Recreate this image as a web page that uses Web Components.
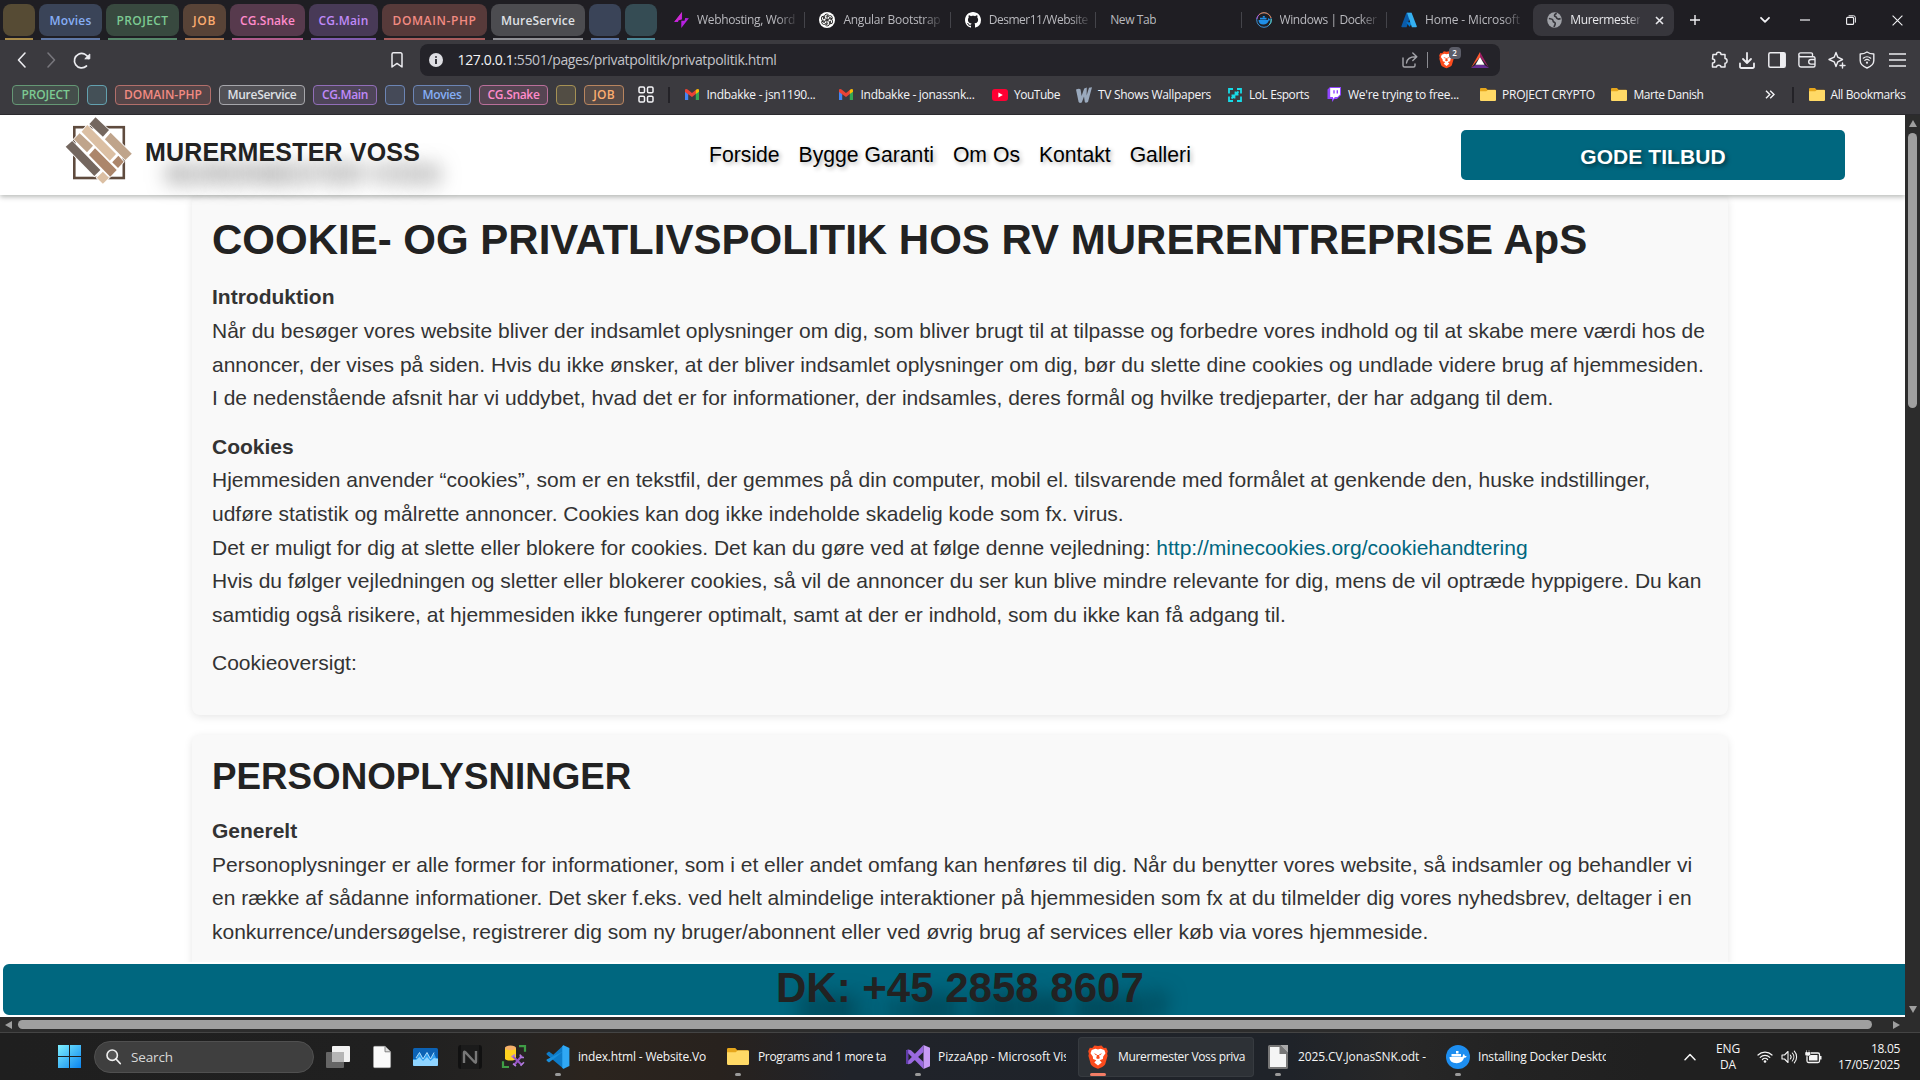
<!DOCTYPE html>
<html lang="da">
<head>
<meta charset="utf-8">
<title>Murermester Voss privatpolitik</title>
<style>
html,body{margin:0;height:100%;overflow:hidden;background:#fff}
body{font-family:"Liberation Sans",Arial,sans-serif}
desktop-screen{width:1920px;height:1080px}
</style>
</head>
<body>
<desktop-screen>
  <browser-tabs></browser-tabs>
  <browser-toolbar></browser-toolbar>
  <bookmark-bar></bookmark-bar>
  <page-view>
    <site-header></site-header>
    <policy-card>
      <h1 slot="title" style="font-size:42px;line-height:50.4px">COOKIE- OG PRIVATLIVSPOLITIK HOS RV MURERENTREPRISE ApS</h1>
      <p><b>Introduktion</b><br>Når du besøger vores website bliver der indsamlet oplysninger om dig, som bliver brugt til at tilpasse og forbedre vores indhold og til at skabe mere værdi hos de<br>annoncer, der vises på siden. Hvis du ikke ønsker, at der bliver indsamlet oplysninger om dig, bør du slette dine cookies og undlade videre brug af hjemmesiden.<br>I de nedenstående afsnit har vi uddybet, hvad det er for informationer, der indsamles, deres formål og hvilke tredjeparter, der har adgang til dem.</p>
      <p><b>Cookies</b><br>Hjemmesiden anvender “cookies”, som er en tekstfil, der gemmes på din computer, mobil el. tilsvarende med formålet at genkende den, huske indstillinger,<br>udføre statistik og målrette annoncer. Cookies kan dog ikke indeholde skadelig kode som fx. virus.<br>Det er muligt for dig at slette eller blokere for cookies. Det kan du gøre ved at følge denne vejledning: <a>http://minecookies.org/cookiehandtering</a><br>Hvis du følger vejledningen og sletter eller blokerer cookies, så vil de annoncer du ser kun blive mindre relevante for dig, mens de vil optræde hyppigere. Du kan<br>samtidig også risikere, at hjemmesiden ikke fungerer optimalt, samt at der er indhold, som du ikke kan få adgang til.</p>
      <p>Cookieoversigt:</p>
    </policy-card>
    <policy-card>
      <h2 slot="title" style="font-size:36.75px;line-height:44.1px">PERSONOPLYSNINGER</h2>
      <p><b>Generelt</b><br>Personoplysninger er alle former for informationer, som i et eller andet omfang kan henføres til dig. Når du benytter vores website, så indsamler og behandler vi<br>en række af sådanne informationer. Det sker f.eks. ved helt almindelige interaktioner på hjemmesiden som fx at du tilmelder dig vores nyhedsbrev, deltager i en<br>konkurrence/undersøgelse, registrerer dig som ny bruger/abonnent eller ved øvrig brug af services eller køb via vores hjemmeside.</p>
    </policy-card>
    <phone-bar slot="footer">DK: +45 2858 8607</phone-bar>
  </page-view>
  <task-bar></task-bar>
</desktop-screen>
<script>
const define=(name,html,init)=>customElements.define(name,class extends HTMLElement{
  connectedCallback(){
    if(this.shadowRoot)return;
    this.attachShadow({mode:'open'}).innerHTML=typeof html==='function'?html(this):html;
    if(init)init(this);
  }
});

/* Icon library: name -> [viewBox, markup] */
const S='fill="none" stroke="currentColor" stroke-linecap="round" stroke-linejoin="round"';
const I={
back:['0 0 9 16',`<path d="M8 1 1.5 8 8 15" ${S} stroke-width="1.6"/>`],
fwd:['0 0 9 16',`<path d="M1 1 7.500 8 1 15" ${S} stroke-width="1.6"/>`],
reload:['0 0 18 17',`<path d="M15.500 6.500A7.200 7.200 0 1 0 13.500 14" ${S} stroke-width="1.700"/><path d="M11.800 6.800h5V2z" fill="currentColor" stroke="currentColor" stroke-linejoin="round"/>`],
mark:['0 0 12 16',`<path d="M1 2.200A1.400 1.400 0 0 1 2.400.8h7.200A1.400 1.400 0 0 1 11 2.200V15l-5-3.600L1 15z" ${S} stroke-width="1.500"/>`],
info:['0 0 14 14','<circle cx="7" cy="7" r="7" fill="#dedee3"/><path d="M7 6v5M7 3.300v1.400" stroke="#242329" stroke-width="1.800"/>'],
share:['0 0 16 16',`<path d="M1 6v7.500a1.500 1.500 0 0 0 1.500 1.500h9a1.500 1.500 0 0 0 1.500-1.500V12M4.500 11C5 7 8 4.800 13.500 4.800M10.800 1l4 3.800-4 3.800" ${S} stroke-width="1.400"/>`],
lion:['0 0 20 24','<path d="M4.200 3 6.500.5 10 1l3.500-.5L15.800 3l2.400-.2 1.600 3.400-.7 2.500.5 2-2.400 8.600c-.5 1.500-5 4-7.200 4.500-2.200-.5-6.700-3-7.200-4.500L.4 10.700l.5-2L.2 6.200 1.800 2.800z" fill="#fb4b1d"/><path d="m10 4.500 2.500-.8 3.800 1.400 1.200 3.200-2.300 3.200-.3 2.500-3.200 1.200 2 2.300L10 20.500 6.300 17.500l2-2.300L5.100 14l-.3-2.500-2.300-3.200 1.200-3.200 3.800-1.400z" fill="#fff"/><path d="m5.800 8.300 3 1-.5 1.300zM14.200 8.300l-3 1 .5 1.300zM9 10l-.8 3.300 1.800.8 1.800-.8L11 10z" fill="#fb4b1d"/>'],
bat:['0 0 18 16','<path d="M9 0 0 16 9 5z" fill="#ff5a32"/><path d="M9 0v5l9 11z" fill="#9e1f63"/><path d="M0 16h18l-4.500-3h-9z" fill="#662d91"/><path d="M9 5 4.500 12.800h9z" fill="#fff"/>'],
puzzle:['0 0 18 18',`<path d="M3 3.500h3.500C6 .5 11 .2 11 3.500h4v4c3 0 2.500 5 0 4.800V16h-4c0-2.500-4.500-2.500-4.500 0H2.500v-4C5.500 12 5.500 8 2.500 8z" ${S} stroke-width="1.500"/>`],
download:['0 0 16 17',`<path d="M8 1v9M4 7l4 4 4-4M1 11.500v3A1.400 1.400 0 0 0 2.400 16h11.200a1.400 1.400 0 0 0 1.400-1.500v-3" ${S} stroke-width="1.800"/>`],
side:['0 0 18 16',`<rect x=".8" y=".8" width="16.400" height="14.400" rx="1.500" ${S} stroke-width="1.500"/><path d="M12 1h5v14h-5z" fill="currentColor"/>`],
wallet:['0 0 18 16',`<path d="M14.500 3.500V2.200A1.300 1.300 0 0 0 13.200.9H2.700a1.900 1.900 0 0 0 0 3.800H15.500A1.500 1.500 0 0 1 17 6v7.500a1.500 1.500 0 0 1-1.500 1.500H3A2.200 2.200 0 0 1 .9 13V2.700M17 7.500h-4a2.300 2.300 0 0 0 0 4.600h4" ${S} stroke-width="1.400"/>`],
spark:['0 0 18 18',`<path d="M8 1.500 9.800 6.200 14.500 8.500 9.800 10.800 8 15.500 6.200 10.800 1 8.500 6.200 6.200z" ${S} stroke-width="1.400"/><path d="M14.500 12v5M12 14.500h5" ${S} stroke-width="1.400"/>`],
vpn:['0 0 16 18',`<path d="M8 1c2 1.500 4.300 2 6.800 2v6.500c0 3.500-3 6-6.800 7.500-3.800-1.500-6.800-4-6.800-7.500V3C3.700 3 6 2.500 8 1z" ${S} stroke-width="1.400"/><path d="M4.300 7.200a5.500 5.500 0 0 1 7.400 0M5.800 9.400a3.300 3.300 0 0 1 4.400 0" ${S} stroke-width="1.200"/><circle cx="8" cy="11.700" r="1.100" fill="currentColor"/>`],
menu:['0 0 18 14','<path d="M0 1h18M0 7h18M0 13h18" stroke="currentColor" stroke-width="1.600"/>'],
bolt:['0 0 14 16','<path d="M7.500 0v7.500H4.200L3.800 10 .2 10zM6.800 16V8.800h3L10.500 6l3.400.2z" fill="#b620e0"/><path d="M.2 10 7.500 0l-1 7.500z" fill="#d02bd0"/>'],
gpt:['0 0 16 16',`<circle cx="8" cy="8" r="8" fill="#fff"/><g fill="none" stroke="#222" stroke-width=".9">${[0,60,120,180,240,300].map(a=>`<path d="M8 7.900 5.500 6.500V4.200a2.200 2.200 0 0 1 4-1.200L6.800 4.600" transform="rotate(${a} 8 8)"/>`).join('')}</g>`],
github:['0 0 16 16','<path fill="#fff" d="M8 0C3.580 0 0 3.580 0 8c0 3.540 2.290 6.530 5.470 7.590.4.070.55-.17.55-.38 0-.19-.01-.82-.01-1.490-2.010.37-2.530-.49-2.690-.94-.09-.23-.48-.94-.82-1.130-.28-.15-.68-.52-.01-.53.63-.01 1.080.58 1.230.82.72 1.210 1.870.87 2.330.66.070-.52.28-.87.51-1.070-1.780-.2-3.640-.89-3.640-3.950 0-.87.31-1.590.82-2.150-.08-.2-.36-1.020.08-2.120 0 0 .67-.21 2.200.82.64-.18 1.320-.27 2-.27s1.360.09 2 .27c1.530-1.040 2.200-.82 2.200-.82.44 1.100.16 1.920.08 2.120.51.56.82 1.270.82 2.150 0 3.070-1.870 3.750-3.650 3.950.29.25.54.73.54 1.480 0 1.070-.01 1.930-.01 2.200 0 .21.15.46.55.38A8.010 8.010 0 0 0 16 8c0-4.420-3.580-8-8-8z"/>'],
dockring:['0 0 16 16','<circle cx="8" cy="8" r="7.300" fill="none" stroke="#3b8fd0" stroke-width="1"/><path d="M3 2.700A7.300 7.300 0 0 1 15 6" fill="none" stroke="#ef7a3d" stroke-width="1"/><path d="M.8 7a7.300 7.300 0 0 1 2.200-4.300" fill="none" stroke="#c04fd0"/><path d="M15.200 7a7.300 7.300 0 0 1-2 6" fill="none" stroke="#5bd0c0"/><path d="M2.500 8h9.300c.2-.9.200-1.300.8-2 .6.300.8.900.8 1.300h1c-.2.800-.8 1.200-1.600 1.200-.8 2.500-2.800 4-5.500 4C4.500 12.500 2.500 11 2.500 8zM4 5.800h6.500V7.600H4zM6.800 4h2v1.600h-2z" fill="#1f8fe8"/>'],
azure:['0 0 16 16','<path d="M5.400.8h5L5.600 15.200H1.200a.8.800 0 0 1-.8-1z" fill="#0a5ba8"/><path d="M11.500 10.200H5.200l3.400 4.500z" fill="#0078d4"/><path d="M10.600.8H6l4.900 14.400h4.200a.8.800 0 0 0 .7-1z" fill="#35b0f0"/>'],
globe:['0 0 16 16','<circle cx="8" cy="8" r="7.800" fill="#a0a2a8"/><path d="M2 6.500c3 .3 4.500 1 4.500 2.500s2.300.8 2.300 2.500-1 2-1.300 3.500M14.500 6.500c-2 1-4 .5-4.500-1s-2-.5-2-2 .8-1.800 2.500-2" fill="none" stroke="#37363c" stroke-width="1.700"/>'],
x:['0 0 9 9','<path d="M1 1l7 7M8 1 1 8" stroke="currentColor" stroke-width="1.600"/>'],
xt:['0 0 11 11','<path d="M.6.6l9.800 9.800M10.400.6.6 10.400" stroke="currentColor" stroke-width="1.100"/>'],
plus:['0 0 10 10','<path d="M5 0v10M0 5h10" stroke="currentColor" stroke-width="1.400"/>'],
down:['0 0 10 6',`<path d="M1 .8l4 4 4-4" ${S} stroke-width="1.800"/>`],
up:['0 0 12 8',`<path d="M1 6.800 6 1.500l5 5.300" ${S} stroke-width="1.500"/>`],
min:['0 0 10 10','<path d="M0 5h10" stroke="currentColor" stroke-width="1.200"/>'],
rest:['0 0 10 10','<rect x=".6" y="2.400" width="7" height="7" rx="1" fill="none" stroke="currentColor" stroke-width="1.100"/><path d="M2.600.8h5A1.800 1.800 0 0 1 9.400 2.600v5" fill="none" stroke="currentColor"/>'],
grid:['0 0 16 17',`<g ${S} stroke-width="1.500"><rect x="1" y="1" width="5.500" height="5.800" rx="1.300"/><rect x="9.500" y="1" width="5.500" height="5.800" rx="1.300"/><rect x="1" y="10.200" width="5.500" height="5.800" rx="1.300"/><rect x="9.500" y="10.200" width="5.500" height="5.800" rx="1.300"/></g>`],
gmail:['0 0 14 11','<path d="M0 1.500V11h3.200V4z" fill="#4285f4"/><path d="M14 1.500V11h-3.200V4z" fill="#34a853"/><path d="M0 1.500C0 0 1.500-.3 2.600.6L7 4l4.400-3.400L10.800 5 7 8 0 3z" fill="#ea4335"/><path d="M10.800 1v4.100L14 2.800V1.500C14 0 12.500-.3 11.400.6z" fill="#fbbc04"/>'],
yt:['0 0 16 12','<rect width="16" height="12" rx="3" fill="#ff0033"/><path d="M6.400 3.400v5.200L10.800 6z" fill="#fff"/>'],
w:['0 0 16 16','<path d="M0 2.500C2 1.500 4 1.500 4.600 2.500L5.600 9 8.200 1.500 10.800.5 10.600 8.500 13 .8 16 .2 12 15c-1.800 1-2.800.7-3.200 0L8 9.500 5.800 15.500c-1.800.8-2.800.4-3.200-.4z" fill="#9aa9bd"/>'],
lol:['0 0 14 14','<path d="M1 5.500V1h4M9 1h4v4.500M1 8.500V13h4M9 13h4V8.500M3.500 10.500l3-3M3.500 7.500h3v3M10.500 3.500l-3 3M10.500 6.500h-3v-3" fill="none" stroke="#18dbe8" stroke-width="1.800"/>'],
twitch:['0 0 14 15','<path d="M.5 2.500 3 0h11v8l-4 4H7.500L5 15v-3H.5z" fill="#9146ff"/><path d="M3.200 1h9.800v6.500L10.500 10H8l-2 2v-2H3.200z" fill="#fff"/><path d="M7 3.200v3.300M10.300 3.200v3.300" stroke="#9146ff" stroke-width="1.400"/>'],
folder:['0 0 16 13','<path d="M0 1a1 1 0 0 1 1-1h5l1.500 1.800H15a1 1 0 0 1 1 1V5H0z" fill="#e6a61c"/><path d="M0 3.200h6.300L7.800 2H15a1 1 0 0 1 1 1v9a1 1 0 0 1-1 1H1a1 1 0 0 1-1-1z" fill="#ffd966"/>'],
more:['0 0 10 9','<path d="M1 .7l3.800 3.800L1 8.300M5.200.7 9 4.500 5.200 8.300" fill="none" stroke="currentColor" stroke-width="1.400"/>'],
win:['0 0 23 23','<defs><linearGradient id="g" x2="1" y2="1"><stop stop-color="#7df0ff"/><stop offset="1" stop-color="#0a84f0"/></linearGradient></defs><path d="M0 0h11v11H0zM12 0h11v11H12zM0 12h11v11H0zM12 12h11v11H12z" fill="url(#g)"/>'],
search:['0 0 15 15','<circle cx="6.200" cy="6.200" r="5.200" fill="#555" stroke="#f0f0f0" stroke-width="1.600"/><path d="m10 10 4.200 4.500" stroke="#f0f0f0" stroke-width="1.800" stroke-linecap="round"/>'],
views:['0 0 24 22','<rect y="6" width="18" height="16" rx="1" fill="#666"/><rect x="6" width="18" height="16" rx="1" fill="#f2f2f2"/><path d="M6 6h12v10H6z" fill="#b5b5b5"/>'],
doc:['0 0 18 22','<path d="M.5 1.500A1.200 1.200 0 0 1 1.700.3H12l5.600 5.500v14.700a1.200 1.200 0 0 1-1.200 1.200H1.700a1.200 1.200 0 0 1-1.200-1.200z" fill="#fafafa" stroke="#aaa" stroke-width=".5"/><path d="M12 .5v5.300h5.500" fill="#ddd" stroke="#777" stroke-width=".9"/>'],
mon:['0 0 25 18','<rect width="25" height="18" rx="1.500" fill="#0c62b4"/><path d="M0 11h3l3.500-6.500L10 11l4-6.500L17.500 11 21 5l2 5h2v6.500a1.500 1.500 0 0 1-1.500 1.500h-22A1.500 1.500 0 0 1 0 16z" fill="#2f9ff0"/><path d="M0 12h3l3.500-3 3.500 4 4-4 3.500 4 3.500-3 4 1v5.500a1.500 1.500 0 0 1-1.500 1.500h-22A1.500 1.500 0 0 1 0 16.500z" fill="#8fd4ff"/><path d="m3 10 3.500-5.500L10 11l4-6.500L17.500 11 21 4.500" fill="none" stroke="#bfe6ff" stroke-width=".9"/>'],
n:['0 0 24 24','<rect width="24" height="24" rx="3" fill="#111"/><rect x="3" y="0" width="18" height="24" fill="#1b1b1b"/><path d="M6 18V7.500q0-1.500 1.300-.3l9.400 10q1.300 1.200 1.300-.5V6" fill="none" stroke="#777" stroke-width="2.400"/>'],
db:['0 0 24 24','<path d="M17 1.200h6V7M1 17v6h6" fill="none" stroke="#3f9d46" stroke-width="2.200"/><path d="M3 3v11c0 3 11 3 11 0V3z" fill="#ffd21f"/><ellipse cx="8.500" cy="3" rx="5.500" ry="2.500" fill="#f5b06a"/><path d="m11 12 9 9M20 11l-8 10" stroke="#9a57c9" stroke-width="2.200"/><path d="M9.500 12.500 13 10M18 10l1 3h3M11 19.500l3 2.500M22 18l-3.500 3.500" stroke="#b07bdc" stroke-width="1.600" fill="none"/>'],
code:['0 0 24 24','<path d="M17.500.3 7.300 9.700 3 6.400l-2.400 1.800v1.200L17.500 23.700l1-.5v-22z" fill="#0e7cc9"/><path d="M17.500 6.200.6 14.600v1.200L3 17.600 17.500 6.200z" fill="#1a8fdc"/><path d="M17.500.3 23.400 3v18l-5.900 2.700-1.200-.7V1z" fill="#2fa8f5"/>'],
vs:['0 0 24 24','<path d="M17.500 0 24 2.700v18.600L17.500 24z" fill="#c79bf5"/><path d="M17.500 0v7L5 18.500l-2.800.8-2.200-1V5.500l2.200-1 2.800.8L17.500 17v7L2.200 8.300v7.500z" fill="#9a6ae0"/><path d="M0 5.500l2.200-1V19.300L0 18.300z" fill="#5f3ba8"/>'],
lo:['0 0 20 24','<path d="M0 1.500A1.500 1.500 0 0 1 1.500 0H12l8 8v14.500a1.500 1.500 0 0 1-1.500 1.500h-17A1.500 1.500 0 0 1 0 22.500z" fill="#777"/><path d="M2 2h9.500v7H18v13H2z" fill="#f5f5f5"/><path d="M12 0h8v8z" fill="#a9a9a9"/>'],
docker:['0 0 24 24','<circle cx="12" cy="12" r="12" fill="#1d8ef0"/><path d="M3.500 12h13c.3-1.300.3-2 1.200-3 .9.600 1.200 1.300 1.100 2h1.900c-.4 1.300-1.300 1.800-2.600 1.800-1 3.500-3.700 5.400-7.300 5.400-4.500 0-7.300-2-7.300-6.200zM5.500 9h9.500v2.500H5.500zM10 6h2.500v2.500H10z" fill="#fff"/>'],
wifi:['0 0 16 13',`<path d="M1 5a10 10 0 0 1 14 0M3.200 7.300a6.800 6.800 0 0 1 9.600 0M5.400 9.500a3.700 3.700 0 0 1 5.200 0" ${S} stroke-width="1.200"/><circle cx="8" cy="11.500" r="1.300" fill="currentColor"/>`],
vol:['0 0 16 14',`<path d="M1 5h2.500L7 1.500v11L3.500 9H1zM9.300 5a3 3 0 0 1 0 4M11.300 3a6 6 0 0 1 0 8M13.300 1.200a8.500 8.500 0 0 1 0 11.600" ${S} stroke-width="1.100"/>`],
batt:['0 0 17 14',`<rect x="2" y="3" width="12.500" height="9.500" rx="1.500" ${S} stroke-width="1.300"/><path d="M4 5h8.500v5.500H4z" fill="currentColor"/><path d="M15 6h1.500v3.500H15z" fill="currentColor"/><path d="M0 2h1V0h1v2h1.500V0h1v2h1v2.500a2 2 0 0 1-2 1.500H2A2 2 0 0 1 0 4.500z" fill="currentColor" stroke="#202020" stroke-width=".5"/>`],
logo:['65 116 68 69','<rect x="74.300" y="127.200" width="49.500" height="50.800" fill="none" stroke="#5f4b3e" stroke-width="2.600"/><g stroke="#fff" stroke-width="1.600" paint-order="stroke"><path d="M95.500 117.300 109 130 102.900 136.700 89.400 124z" fill="#74675f"/><path d="M87.300 125 116 154 109.800 160.700 81.600 131.700z" fill="#dbbfa3"/><path d="M110.600 132.700 131.800 153.700 125.300 160 104.900 139.300z" fill="#bfa48b"/><path d="M79.600 133.300 93 145.700 87 152.300 73.900 139.300z" fill="#bfa48b"/><path d="M95 148.300 116.700 170 110.200 176.700 89 155z" fill="#ac866b"/><path d="M72.200 141 100.400 170 94.300 176 65.700 146.700z" fill="#74675f"/><path d="M118.400 155.700 123.700 161.700 118 168 112.200 162.300z" fill="#ac866b"/><path d="M102.900 171.700 109 177.700 102.900 183.700 96.700 177.700z" fill="#dbbfa3"/></g>']
};
const ic=(n,w,h,ml=0,extra='')=>`<g-icon name="${n}" style="width:${w}px;height:${h}px;margin-left:${ml}px;${extra}"></g-icon>`;
const tx=(t,w,ml=0,extra='')=>`<fit-text w="${w}" style="margin-left:${ml}px;${extra}">${t}</fit-text>`;

define('g-icon',el=>{const [vb,m]=I[el.getAttribute('name')];
  return `<style>:host{display:block;flex:none}svg{display:block;width:100%;height:100%;overflow:visible}</style><svg viewBox="${vb}" preserveAspectRatio="none">${m}</svg>`});

/* Single-line label whose tracking is adjusted to occupy a given width. */
define('fit-text',`<style>:host{display:block;flex:none;white-space:nowrap}span{display:inline-block}</style><span><slot></slot></span>`,el=>{
  const w=+el.getAttribute('w'),s=el.shadowRoot.querySelector('span');
  const n=el.textContent.length;
  s.style.letterSpacing=((w-s.getBoundingClientRect().width)/n).toFixed(3)+'px';
  el.style.width=w+'px';
});

define('desktop-screen','<style>:host{display:flex;flex-direction:column;overflow:hidden;background:#3b3a3f}</style><slot></slot>');

const C={y:['#564b34','#a88b4a','#e0c060'],b:['#3a4458','#5f78a6','#86aef5'],g:['#38493f','#56876a','#7cc992'],o:['#584337','#a8754f','#fcad70'],p:['#573a4d','#b05b8c','#ff8bcb'],v:['#483a57','#7f5bb0','#c08af9'],r:['#573a3a','#a85c5c','#f28b82'],w:['#4c4c50','#8f8f94','#dfe0e5'],t:['#354c54','#4d8a99','#78d9ec']};
define('tab-group',el=>{const [bg,u,fg]=C[el.getAttribute('c')];return `<style>:host{display:flex;flex-direction:column;flex:none;height:36px;width:${el.getAttribute('w')}px}
  div{height:32px;border-radius:8px;background:${bg};color:${fg};display:flex;align-items:center;justify-content:center;font-weight:600;padding-top:1px;box-sizing:border-box}i{display:block;height:2px;margin:2px 2px 0;background:${u}}</style><div><slot></slot></div><i></i>`});
define('browser-tab',el=>`<style>:host{display:flex;align-items:center;flex:none;box-sizing:border-box;width:145.4px;height:32px;position:relative;color:#b9b9be}
  :host([active]){background:#37363c;border-radius:8px;width:141px;color:#e8e8ec;margin-left:1px}
  .t{overflow:hidden;-webkit-mask:linear-gradient(90deg,#000 82%,transparent 104%);mask:linear-gradient(90deg,#000 82%,transparent 104%)}
  .t.n{-webkit-mask:none;mask:none}
  i{width:1px;height:16px;background:#44444a;margin-left:auto}</style>${el.getAttribute('icon')?ic(el.getAttribute('icon'),el.getAttribute('iw')||16,16,14):'<span style="width:6px"></span>'}<div class="t ${el.hasAttribute('nofade')?'n':''}" style="margin-left:8px">${tx(el.getAttribute('label'),el.getAttribute('tw'))}</div>${el.hasAttribute('active')?ic('x',9,9,15):el.hasAttribute('last')?'':'<i></i>'}`);
define('browser-tabs',`<style>:host{display:flex;align-items:flex-start;flex:none;box-sizing:border-box;height:40px;padding:4px 0 0 3px;background:#1f1e23;font:12px/16px "Open Sans","Noto Sans",sans-serif}
  .g{display:flex;gap:4px;margin-right:3px}.e{display:flex;align-items:center;height:32px;color:#f2f2f5}</style>
<div class="g"><tab-group c="y" w="32"></tab-group><tab-group c="b" w="63">${tx('Movies',42)}</tab-group><tab-group c="g" w="73">${tx('PROJECT',52)}</tab-group><tab-group c="o" w="43">${tx('JOB',23)}</tab-group><tab-group c="p" w="75">${tx('CG.Snake',55)}</tab-group><tab-group c="v" w="69">${tx('CG.Main',50)}</tab-group><tab-group c="r" w="105">${tx('DOMAIN-PHP',84)}</tab-group><tab-group c="w" w="94">${tx('MureService',74)}</tab-group><tab-group c="b" w="32"></tab-group><tab-group c="t" w="32"></tab-group></div>
<browser-tab icon="bolt" iw="15" label="Webhosting, Word" tw="98"></browser-tab><browser-tab icon="gpt" label="Angular Bootstrap" tw="97"></browser-tab><browser-tab icon="github" label="Desmer11/Website" tw="99"></browser-tab><browser-tab label="New Tab" tw="46" nofade></browser-tab><browser-tab icon="dockring" label="Windows | Docker" tw="97"></browser-tab><browser-tab icon="azure" label="Home - Microsoft" tw="95" last></browser-tab><browser-tab icon="globe" iw="15" label="Murermester " tw="70" active></browser-tab>
<div class="e">${ic('plus',10,10,16)}${ic('down',10,6,60)}${ic('min',10,10,30)}${ic('rest',10,10,36)}${ic('xt',11,11,36)}</div>`);

define('browser-toolbar',`<style>:host{display:flex;align-items:center;flex:none;height:40px;background:#3b3a3f;color:#ececf0;font:14px/20px "Open Sans","Noto Sans",sans-serif}
 .u{display:flex;align-items:center;box-sizing:border-box;width:1080px;height:32px;border-radius:8px;background:#242329;margin-left:17px;padding-left:9px;color:#c3c3c9}
 .u b{font-weight:400;color:#f4f4f7}.d{width:1px;height:16px;background:#8c8c92;margin-left:9px}
 .br{position:relative;margin-left:11px}.bd{position:absolute;left:10px;top:-4px;width:12px;height:12px;border-radius:4px;background:#5c5d68;color:#fff;font-size:8px;line-height:12px;text-align:center;font-weight:600}</style>
 ${ic('back',9,16,16.5)}${ic('fwd',9,16,21,'color:#77767c')}${ic('reload',18,17,17)}${ic('mark',12,16,300)}
 <div class="u">${ic('info',14,14,0)}<fit-text w="319" style="margin-left:15px"><b>127.0.0.1</b>:5501/pages/privatpolitik/privatpolitik.html</fit-text>${ic('share',16,16,625,'color:#a5a5ab')}<span class="d"></span><div class="br">${ic('lion',15,17.500)}<span class="bd">2</span></div>${ic('bat',18,16,17.5)}</div>
 ${ic('puzzle',18,18,210)}${ic('download',16,17,11)}${ic('side',18,16,13)}${ic('wallet',18,16,12)}${ic('spark',18,18,12)}${ic('vpn',16,18,13)}${ic('menu',17,14,14)}`);

define('group-pill',el=>{const [bg,u,fg]=C[el.getAttribute('c')];return `<style>:host{display:flex;align-items:center;justify-content:center;flex:none;box-sizing:border-box;height:20px;border-radius:4px;border:1px solid color-mix(in srgb,${fg} 65%,#3b3a3f);background:color-mix(in srgb,${fg} 14%,#3b3a3f);color:${fg};font-weight:600;width:${el.getAttribute('w')}px}</style><slot></slot>`});
define('bookmark-bar',`<style>:host{display:flex;align-items:center;flex:none;box-sizing:border-box;height:35px;padding:0 0 5px 12px;background:#3b3a3f;border-bottom:1px solid #2b2a2e;color:#f4f4f7;font:12px/16px "Open Sans","Noto Sans",sans-serif}
 .g{display:flex;gap:8px}.d{width:2px;height:16px;background:#232227;flex:none}</style>
<div class="g"><group-pill c="g" w="67">${tx('PROJECT',48)}</group-pill><group-pill c="t" w="20"></group-pill><group-pill c="r" w="96">${tx('DOMAIN-PHP',78)}</group-pill><group-pill c="w" w="86">${tx('MureService',69)}</group-pill><group-pill c="v" w="64">${tx('CG.Main',46)}</group-pill><group-pill c="b" w="20"></group-pill><group-pill c="b" w="58">${tx('Movies',39)}</group-pill><group-pill c="p" w="69">${tx('CG.Snake',52)}</group-pill><group-pill c="y" w="20"></group-pill><group-pill c="o" w="40">${tx('JOB',21.500)}</group-pill></div>
${ic('grid',16,17,14)}<span class="d" style="margin-left:14px"></span>
${ic('gmail',14,11,15)}${tx('Indbakke - jsn1190...',109,7.500)}${ic('gmail',14,11,23.500)}${tx('Indbakke - jonassnk...',114,7.500)}${ic('yt',16,12,17.500)}${tx('YouTube',46,6)}${ic('w',16,16,15.500)}${tx('TV Shows Wallpapers',113,6.500)}${ic('lol',14,14,17)}${tx('LoL Esports',60,7)}${ic('twitch',14,15,18)}${tx("We're trying to free...",111,7)}${ic('folder',16,13,21)}${tx('PROJECT CRYPTO',93,6)}${ic('folder',16,13,16)}${tx('Marte Danish',70,6.500)}${ic('more',10,9,61.500)}<span class="d" style="margin-left:17px"></span>${ic('folder',16,13,14.500)}${tx('All Bookmarks',75,6)}`);

define('page-view',`<style>:host{display:grid;grid-template:902px 15px / 1905px 15px;flex:none;background:#2c2c2c}
 .v{grid-area:1/1;position:relative;overflow:hidden;background:#fff;display:flex;flex-direction:column}
 .vs{display:flex;flex-direction:column;align-items:center}.hs{grid-row:2;grid-column:1;display:flex;align-items:center}
 .a{width:0;height:0;border:5px solid transparent}
 .vt{width:9px;height:275px;border-radius:5px;background:#9f9f9f;margin-top:6px}
 .ht{width:1854px;height:9px;border-radius:5px;background:#9f9f9f;margin-left:6px}</style>
 <div class="v"><slot></slot><slot name="footer"></slot></div>
 <div class="vs"><i class="a" style="border:4.500px solid transparent;border-top:0;border-bottom:7px solid #9f9f9f;margin-top:5px"></i><i class="vt"></i><i class="a" style="border:4.500px solid transparent;border-bottom:0;border-top:7px solid #9f9f9f;margin-top:auto;margin-bottom:4px"></i></div>
 <div class="hs"><i class="a" style="border:4.500px solid transparent;border-left:0;border-right:7px solid #9f9f9f;margin-left:5px"></i><i class="ht"></i><i class="a" style="border:4.500px solid transparent;border-right:0;border-left:7px solid #9f9f9f;margin-left:21px"></i></div>`);

define('site-header',`<style>:host{display:flex;flex:none;align-items:flex-start;height:80px;background:#fff;box-shadow:0 2px 5px rgba(0,10,0,.28);position:relative;z-index:2;color:#222}
 .n{font-weight:700;font-size:25px;line-height:30px;margin:22px 0 0 12px;text-shadow:21px 22px 20px rgba(0,0,0,.55)}
 nav{display:flex;gap:18.9px;font-size:21.200px;line-height:26px;color:#000;text-shadow:2px 2px 4px rgba(0,0,0,.3);margin:27px 0 0 289px}
 .b{margin:15px 0 0 auto;width:384px;height:50px;margin-right:60px;box-sizing:border-box;border-radius:5px;background:#00677f;color:#fff;display:flex;align-items:center;justify-content:center;font-weight:700;font-size:21px;line-height:26px;padding-top:3px;text-shadow:2px 2px 4px rgba(0,0,0,.5)}</style>
 ${ic('logo',68,69,65,'margin-top:1px')}<div class="n">${tx('MURERMESTER VOSS',275)}</div>
 <nav>${['Forside','Bygge Garanti','Om Os','Kontakt','Galleri'].map(t=>`<span>${t}</span>`).join('')}</nav>
 <div class="b">${tx('GODE TILBUD',145.5)}</div>`);

define('policy-card',`<style>:host{display:block;flex:none;box-sizing:border-box;width:1536px;margin:0 0 20px 192px;padding:20px;background:#f9f9f9;border-radius:8px;box-shadow:0 2px 8px rgba(0,0,0,.1);color:#333;font-size:21px;line-height:33.600px;white-space:nowrap}
 ::slotted(h1),::slotted(h2){margin:0 0 15px;color:#222}::slotted(p){margin:0 0 15px!important}</style><slot name="title"></slot><slot></slot>`,el=>{
  el.querySelectorAll('a').forEach(a=>a.style.color='#00677f');
});
define('phone-bar',`<style>:host{position:absolute;left:1px;bottom:0;width:1918px;height:55px;box-sizing:border-box;border:2px solid #fff;border-radius:8px;background:#00677f;z-index:3;overflow:hidden;color:#222;font-size:42px;font-weight:700;line-height:48px;display:block;padding-left:773px;text-shadow:24px 22px 20px rgba(0,0,0,.55);white-space:nowrap}</style><slot></slot>`);

const app=(icon,w,h,label,tw,ml,dot='')=>`<div class="app ${dot}" style="margin-left:${ml}px"><div class="i">${ic(icon,w,h)}</div><div class="l">${tx(label,tw)}</div></div>`;
define('task-bar',`<style>:host{display:flex;align-items:center;flex:none;box-sizing:border-box;height:48px;border-top:1px solid #444;background:linear-gradient(90deg,#1f1f1f 0,#202020 400px,#262422 520px,#2b241e 590px,#28221e 720px,#20232a 850px,#1f2329 1290px,#272727 1400px,#232323 1500px,#202020 1650px);color:#f5f5f5;font:12px/16px "Open Sans","Noto Sans",sans-serif}
 .s{display:flex;align-items:center;box-sizing:border-box;width:220px;height:32px;border-radius:16px;border:1px solid #505050;background:#3f3f3f;margin-left:13px;color:#d8d8d8;font-size:13.5px}
 .app{display:flex;align-items:center;position:relative;width:176px;height:40px;box-sizing:border-box;flex:none;border-radius:4px}
 .i{width:24px;margin-left:8px;display:flex;justify-content:center}.l{margin-left:8px;width:128px;overflow:hidden}
 .app::after{content:"";position:absolute;left:17px;bottom:1px;width:6px;height:3px;border-radius:2px;background:#9a9a9a}
 .on{background:#2d3136;box-shadow:inset 0 0 0 1px #373b40}.on::after{left:12px;bottom:1px;width:16px;background:#f37d66}
 .c{display:flex;flex-direction:column;align-items:flex-end}</style>
 ${ic('win',23,23,58)}<div class="s">${ic('search',15,15,11)}${tx('Search',42,10)}</div>
 ${ic('views',24,22,12)}${ic('doc',18,22,23)}${ic('mon',25,18,22)}${ic('n',24,24,20)}${ic('db',24,23,20)}
 ${app('code',24,24,'index.html - Website.Vo',128,12)}${app('folder',22,17,'Programs and 1 more ta',128,4)}${app('vs',24,24,'PizzaApp - Microsoft Vis',131,4)}${app('lion',20,24,'Murermester Voss priva',127,4,'on')}${app('lo',20,24,'2025.CV.JonasSNK.odt -',128,4)}${app('docker',24,24,'Installing Docker Deskto',131,4)}
 ${ic('up',12,8,69.500)}<div class="c" style="margin-left:20.5px;align-items:center">${tx('ENG',24)}${tx('DA',16)}</div>${ic('wifi',16,13,17)}${ic('vol',16,14,8)}${ic('batt',17,14,8)}<div class="c" style="margin-left:16px">${tx('18.05',29)}${tx('17/05/2025',62)}</div>`);
</script>
</body>
</html>
